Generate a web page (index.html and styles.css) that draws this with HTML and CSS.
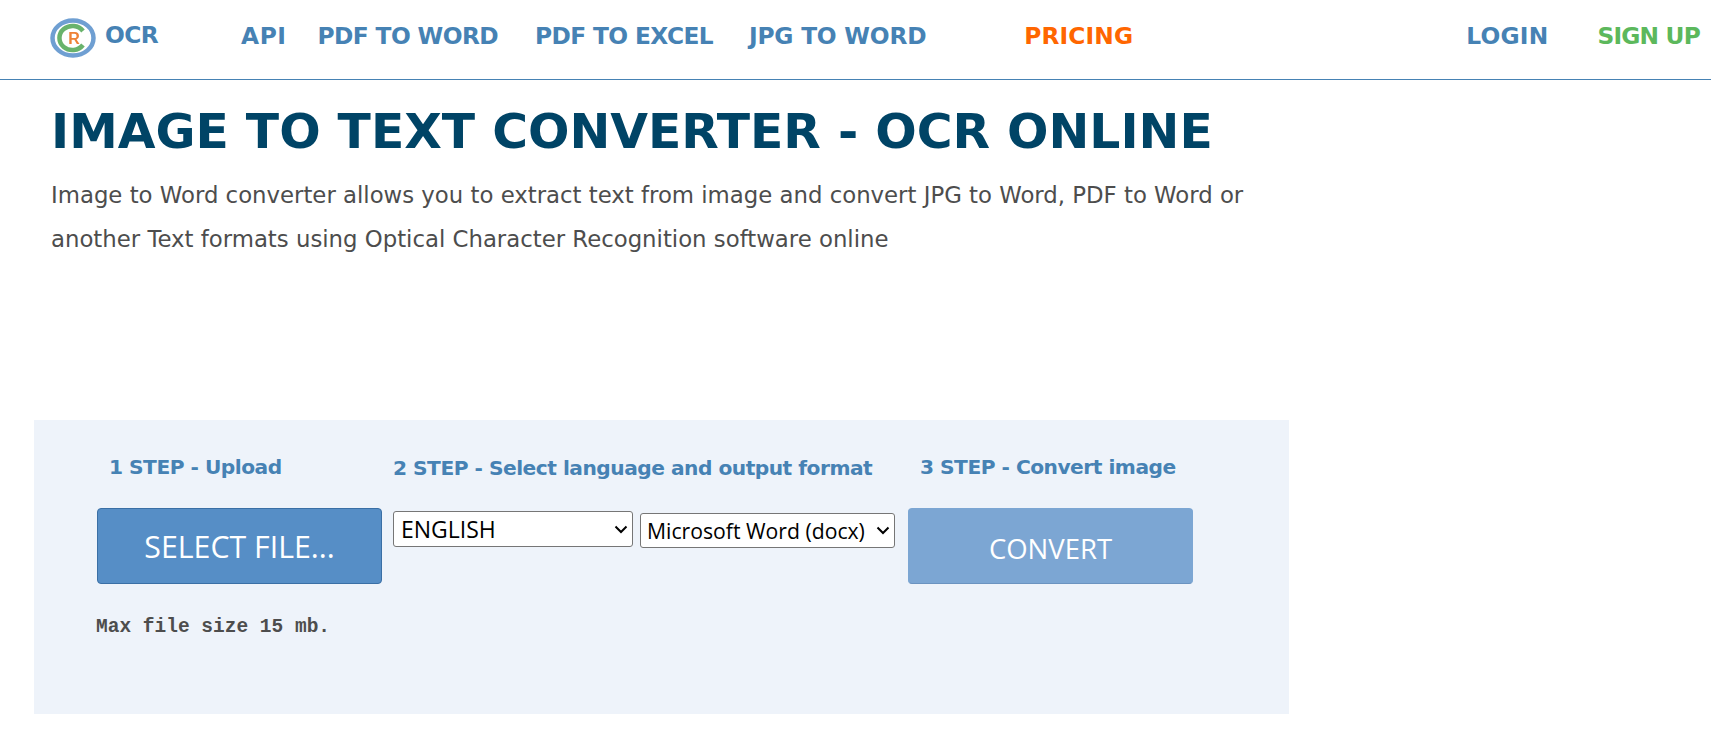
FILE: index.html
```html
<!DOCTYPE html>
<html lang="en">
<head>
	<meta charset="utf-8">
	<title>Image to Text Converter - OCR Online</title>
	<link rel="stylesheet" href="styles.css">
</head>
<body>
	<header class="topbar">
		<a class="brand" href="#">
			<svg class="brand-logo" viewBox="0 0 46 42" width="46" height="42" aria-hidden="true">
				<ellipse class="ring" cx="23" cy="21" rx="20.5" ry="17.5" fill="none" stroke="#6f9fd2" stroke-width="4.5"/>
				<path class="ring" d="M33 14A13 12 0 1 0 33 28" fill="none" stroke="#69b36c" stroke-width="4.5"/>
				<text class="brand-r" x="24" y="27">R</text>
			</svg>
			<span class="brand-name">OCR</span>
		</a>
		<nav class="nav-main">
			<a class="nav-api" href="#">API</a>
			<a class="nav-word" href="#">PDF TO WORD</a>
			<a class="nav-excel" href="#">PDF TO EXCEL</a>
			<a class="nav-jpg" href="#">JPG TO WORD</a>
			<a class="nav-pricing" href="#">PRICING</a>
		</nav>
		<nav class="nav-user">
			<a class="nav-login" href="#">LOGIN</a>
			<a class="nav-signup" href="#">SIGN UP</a>
		</nav>
	</header>

	<main class="content">
		<h1>IMAGE TO TEXT CONVERTER - OCR ONLINE</h1>
		<p class="intro">Image to Word converter allows you to extract text from image and convert JPG to Word, PDF to Word or<br>another Text formats using Optical Character Recognition software online</p>

		<section class="panel">
			<div class="col col-upload">
				<h2 class="step">1 STEP - Upload</h2>
				<button class="btn btn-select" type="button">SELECT FILE...</button>
				<p class="limit">Max file size 15 mb.</p>
			</div>
			<div class="col col-options">
				<h2 class="step">2 STEP - Select language and output format</h2>
				<div class="selects">
					<select class="sel-lang"><option>ENGLISH</option></select>
					<select class="sel-format"><option>Microsoft Word (docx)</option></select>
				</div>
			</div>
			<div class="col col-convert">
				<h2 class="step">3 STEP - Convert image</h2>
				<button class="btn btn-convert" type="button">CONVERT</button>
			</div>
		</section>
	</main>
</body>
</html>
```

FILE: styles.css
```css
html, body {
	margin: 0;
	padding: 0;
}

body {
	background: white;
	color: #4d4d4d;
	font-family: "DejaVu Sans", sans-serif;
}

a {
	text-decoration: none;
	color: #4682b4;
}

.topbar {
	display: flex;
	align-items: center;
	height: 71px;
	padding-bottom: 8px;
	border-bottom: 1px solid #4682b4;
	font-weight: 700;
	font-size: 23.3px;
	letter-spacing: -0.6px;
}

.brand {
	display: flex;
	align-items: center;
	margin-left: 50px;
	width: 191px;
	margin-top: 4px;
}

.brand-logo {
	flex: none;
}

.ring,
.brand-r {
	filter: blur(0.5px);
}

.brand-r {
	font-family: "Liberation Sans", sans-serif;
	font-size: 16px;
	font-weight: 700;
	letter-spacing: 0;
	fill: #ee8236;
	text-anchor: middle;
}

.brand-name {
	margin: -7px 0 0 9px;
}

.nav-main {
	display: flex;
}

.nav-api {
	letter-spacing: 0.6px;
}

.nav-word {
	margin-left: 31px;
}

.nav-excel {
	margin-left: 37px;
}

.nav-jpg {
	margin-left: 36px;
	letter-spacing: -0.2px;
}

a.nav-pricing {
	margin-left: 98px;
	color: #ff6600;
	letter-spacing: 0.1px;
}

.nav-user {
	display: flex;
	margin-left: auto;
	margin-right: 11px;
}

.nav-login {
	letter-spacing: 0.2px;
}

a.nav-signup {
	margin-left: 49px;
	color: #5cb85c;
	letter-spacing: -0.8px;
}

.content {
	padding: 0 0 0 34px;
}

h1 {
	margin: 0;
	padding: 23px 0 0 17px;
	color: #004466;
	font-size: 48.8px;
	line-height: 58px;
	font-weight: 700;
}

.intro {
	margin: 12px 0 0;
	padding-left: 17px;
	font-size: 22.8px;
	line-height: 44px;
}

.panel {
	display: flex;
	box-sizing: border-box;
	width: 1255px;
	height: 294px;
	margin-top: 159px;
	padding: 0 0 0 63px;
	background: #eef3fa;
}

.step {
	margin: 0;
	padding-top: 35px;
	height: 53px;
	color: #4682b4;
	font-size: 20.2px;
	line-height: 24px;
	font-weight: 700;
	letter-spacing: -0.5px;
}

.col-upload {
	width: 296px;
}

.col-upload .step {
	padding-left: 12px;
}

.col-options {
	width: 515px;
}

.col-options .step {
	padding-top: 36px;
	height: 52px;
}

.col-convert .step {
	padding-left: 12px;
}

.btn {
	display: block;
	box-sizing: border-box;
	width: 285px;
	height: 76px;
	border-radius: 4px;
	color: white;
	font-family: "Open Sans", sans-serif;
	cursor: pointer;
}

.btn-select {
	background: #568ec6;
	border: 1px solid #3a6fa5;
	font-size: 30.3px;
}

.btn-convert {
	background: #7ca6d3;
	border: 1px solid #7ca6d3;
	border-bottom-color: #6b93c0;
	font-size: 27.5px;
	padding-top: 6px;
}

.limit {
	margin: 32px 0 0 -1px;
	font-family: "Liberation Mono", monospace;
	font-weight: 700;
	font-size: 19.5px;
	line-height: 22px;
}

.selects {
	display: flex;
	align-items: flex-start;
	padding-top: 3px;
}

select {
	appearance: none;
	box-sizing: border-box;
	border: 1px solid #767676;
	border-radius: 3px;
	color: black;
	font-family: "Open Sans", sans-serif;
	background: white url("data:image/svg+xml,%3Csvg xmlns='http://www.w3.org/2000/svg' width='14' height='9'%3E%3Cpath d='M1.5 1.5 7 7l5.5-5.5' fill='none' stroke='black' stroke-width='2'/%3E%3C/svg%3E") no-repeat right 4px center;
}

.sel-lang {
	width: 240px;
	height: 36px;
	padding-left: 7px;
	font-size: 23px;
}

.sel-format {
	width: 255px;
	height: 35px;
	margin: 2px 0 0 7px;
	padding-left: 6px;
	font-size: 21.2px;
}
```
